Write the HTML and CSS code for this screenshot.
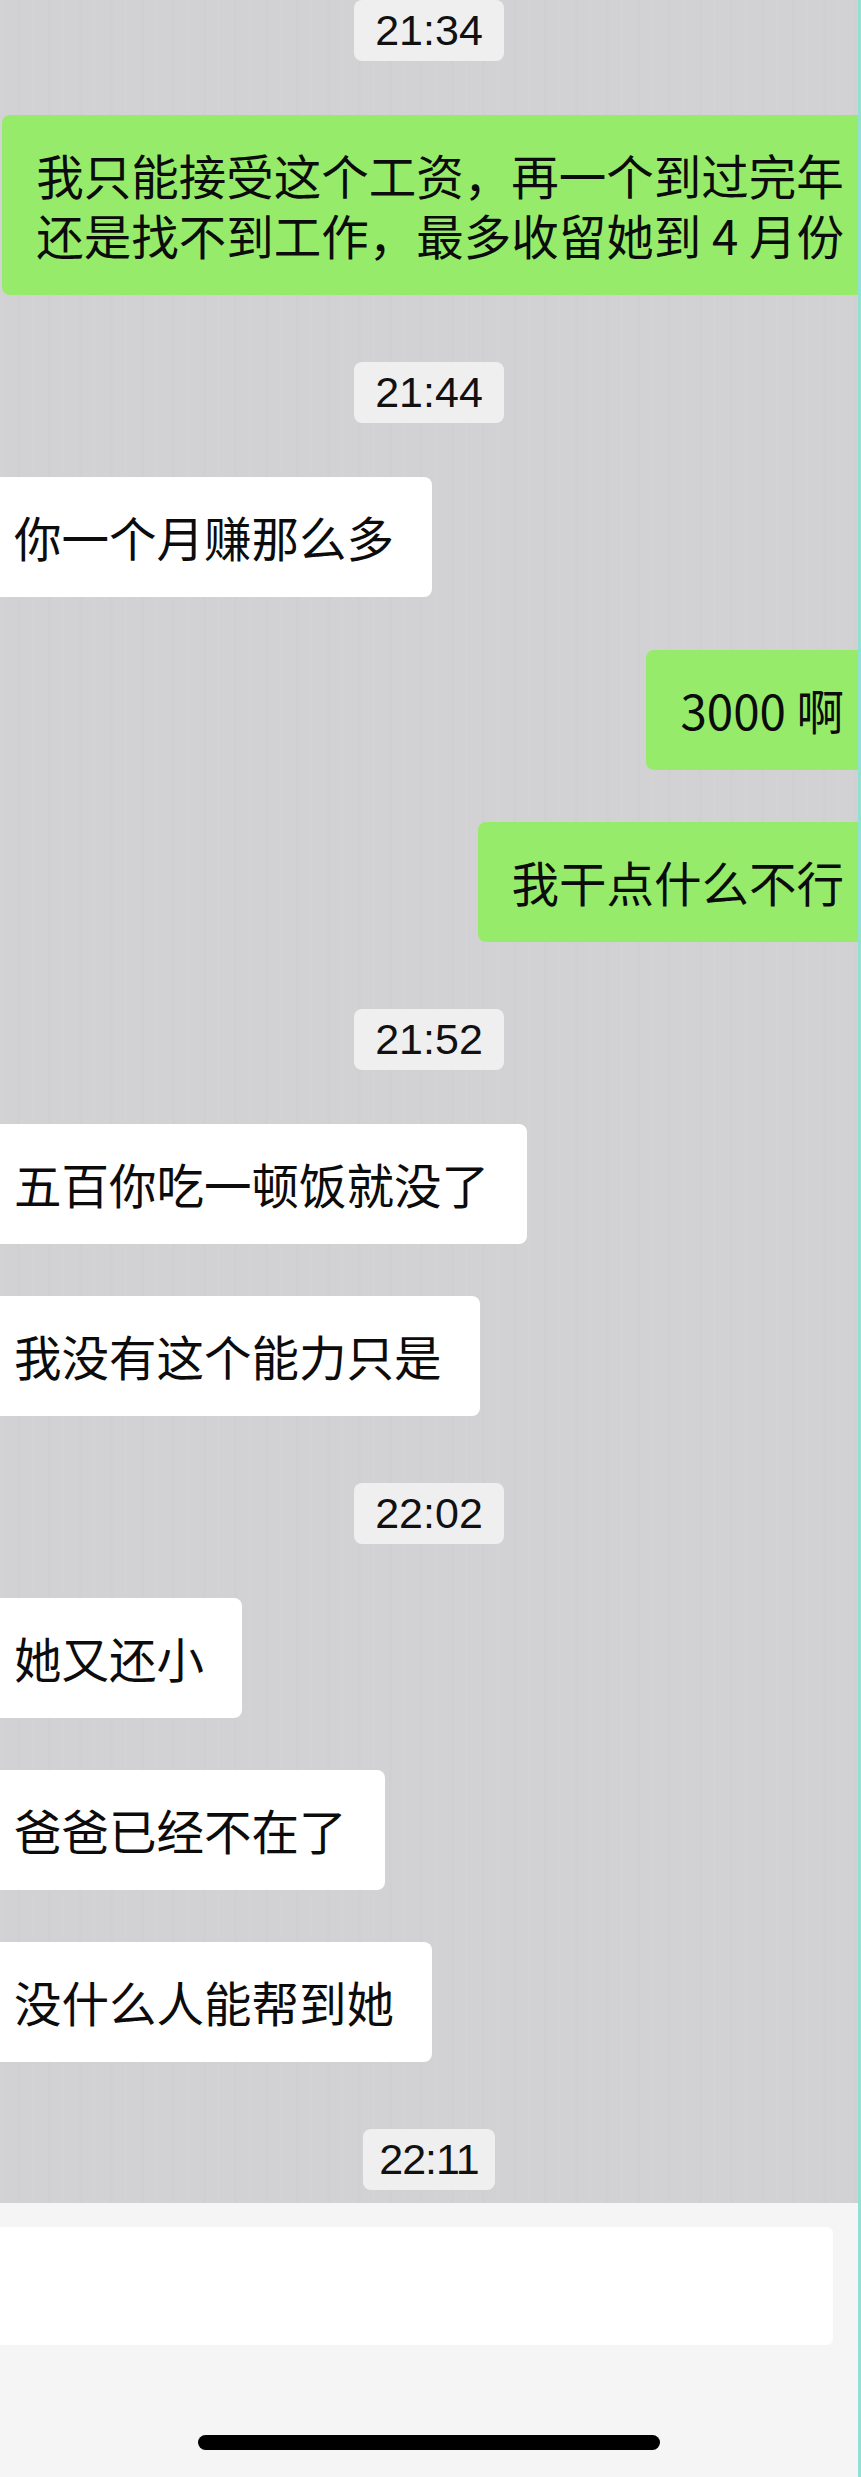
FILE: index.html
```html
<!DOCTYPE html>
<html lang="zh-CN">
<head>
    <meta charset="UTF-8">
    <meta name="viewport" content="width=device-width, initial-scale=1.0">
    <title>聊天记录</title>
    <link rel="stylesheet" href="styles.css">
</head>
<body>
    <div class="screen">
        <div class="chat">
            <div class="time"><span>21:34</span></div>
            <div class="row right">
                <div class="bubble">
                    <div class="line">我只能接受这个工资，再一个到过完年</div>
                    <div class="line">还是找不到工作，最多收留她到 4 月份</div>
                </div>
            </div>

            <div class="time"><span>21:44</span></div>
            <div class="row left">
                <div class="bubble">你一个月赚那么多</div>
            </div>
            <div class="row right gap53">
                <div class="bubble">3000 啊</div>
            </div>
            <div class="row right">
                <div class="bubble">我干点什么不行</div>
            </div>

            <div class="time"><span>21:52</span></div>
            <div class="row left">
                <div class="bubble">五百你吃一顿饭就没了</div>
            </div>
            <div class="row left">
                <div class="bubble">我没有这个能力只是</div>
            </div>

            <div class="time"><span>22:02</span></div>
            <div class="row left">
                <div class="bubble">她又还小</div>
            </div>
            <div class="row left">
                <div class="bubble">爸爸已经不在了</div>
            </div>
            <div class="row left">
                <div class="bubble">没什么人能帮到她</div>
            </div>

            <div class="time narrow"><span>22:11</span></div>
        </div>

        <div class="footer">
            <div class="inputBox"></div>
            <div class="homeBar"></div>
        </div>
    </div>
</body>
</html>
```

FILE: styles.css
```css
body{
    margin: 0;
    font-family: "Noto Sans CJK SC", "Noto Sans", sans-serif;
    color: #0c0c0c;
}
.screen{
    width: 861px;
    height: 2477px;
    box-sizing: border-box;
    border-right: 3px solid #8fe2d3;
    display: flex;
    flex-direction: column;
}
.chat{
    display: flex;
    flex-direction: column;
    padding-bottom: 13px;
    background-color: #d2d2d4;
    background-image:
        repeating-linear-gradient(90deg, rgba(255,255,255,0.025) 0 3px, transparent 3px 17px, rgba(0,0,0,0.012) 17px 20px, transparent 20px 31px);
}
.time{
    display: flex;
    justify-content: center;
    margin-top: 67px;
}
.time:first-child{
    margin-top: 0;
}
.time span{
    font-family: "Liberation Sans", Arial, sans-serif;
    font-size: 43px;
    line-height: 61px;
    padding: 0 21px;
    background: #efeff0;
    border-radius: 8px;
    color: #111;
}
.time.narrow span{
    padding: 0 16px;
    letter-spacing: -1px;
}
.row{
    display: flex;
    margin-top: 52px;
}
.time + .row{
    margin-top: 54px;
}
.row.gap53{
    margin-top: 53px;
}
.row.right{
    justify-content: flex-end;
}
.bubble{
    font-size: 47.5px;
    line-height: 60px;
    padding: 30px 0;
    white-space: nowrap;
}
.left .bubble{
    background: #fff;
    padding-left: 14px;
    padding-right: 38px;
    border-radius: 0 8px 8px 0;
}
.right .bubble{
    background: #96ec6a;
    padding-left: 34px;
    padding-right: 14px;
    border-radius: 8px 0 0 8px;
}
.footer{
    flex: 1;
    display: flex;
    flex-direction: column;
    align-items: center;
    background: #f5f5f5;
}
.inputBox{
    align-self: flex-start;
    width: 833px;
    height: 118px;
    margin-top: 24px;
    background: #fff;
    border-radius: 0 6px 6px 0;
}
.homeBar{
    width: 462px;
    height: 15px;
    margin-top: 90px;
    background: #000;
    border-radius: 8px;
}
```
